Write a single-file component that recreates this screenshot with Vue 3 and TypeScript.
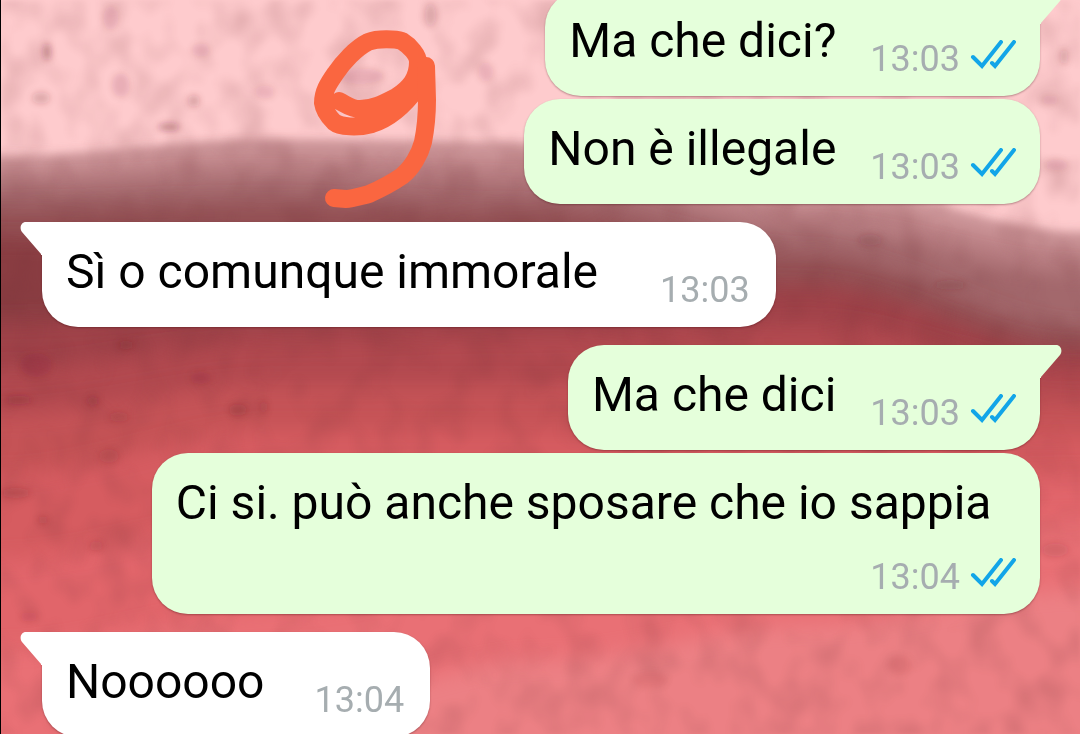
<script setup lang="ts">
interface Message {
  id: number
  text: string
  time: string
  sent: boolean
  tail: boolean
  short?: boolean
}

const messages: Message[] = [
  { id: 1, text: 'Ma che dici?', time: '13:03', sent: true, tail: true },
  { id: 2, text: 'Non è illegale', time: '13:03', sent: true, tail: false },
  { id: 3, text: 'Sì o comunque immorale', time: '13:03', sent: false, tail: true },
  { id: 4, text: 'Ma che dici', time: '13:03', sent: true, tail: true },
  { id: 5, text: 'Ci si. può anche sposare che io sappia', time: '13:04', sent: true, tail: false },
  { id: 6, text: 'Noooooo', time: '13:04', sent: false, tail: true, short: true },
]

interface Layer {
  color: string
  ys: number[]
}

// Each layer fills everything below a curve through five evenly spaced heights.
const layers: Layer[] = [
  { color: '#cf989b', ys: [156, 139, 142, 180, 232] },
  { color: '#b97f83', ys: [170, 156, 161, 205, 246] },
  { color: '#a3686c', ys: [186, 178, 184, 230, 272] },
  { color: '#934f53', ys: [208, 203, 210, 255, 330] },
  { color: '#8a3d43', ys: [238, 245, 250, 400, 480] },
  { color: '#a0434a', ys: [322, 312, 300, 285, 350] },
  { color: '#b2484f', ys: [370, 340, 335, 325, 372] },
  { color: '#c55257', ys: [415, 385, 385, 380, 400] },
  { color: '#d65c61', ys: [475, 430, 430, 430, 435] },
  { color: '#e1656a', ys: [560, 520, 500, 490, 475] },
  { color: '#e97075', ys: [650, 610, 580, 550, 520] },
  { color: '#ec8084', ys: [800, 710, 660, 625, 590] },
]

function layerPath(ys: number[]): string {
  let d = `M-60 ${ys[0]} L0 ${ys[0]}`
  for (let i = 1; i < ys.length; i++) {
    const x = i * 270
    d += ` C${x - 180} ${ys[i - 1]} ${x - 90} ${ys[i]} ${x} ${ys[i]}`
  }
  return `${d} L1140 ${ys[4]} V860 H-60 Z`
}

const spots: number[][] = [
  [46, 52, 4, 9, 0.35], [120, 85, 9, 12, 0.14], [40, 98, 9, 6, 0.2], [193, 101, 6, 6, 0.24],
  [168, 127, 11, 4, 0.34], [200, 50, 9, 7, 0.13], [360, 76, 24, 8, 0.13], [430, 15, 6, 12, 0.16],
  [110, 18, 8, 12, 0.12], [485, 72, 8, 10, 0.12], [264, 92, 10, 7, 0.12], [1064, 57, 4, 8, 0.2],
  [1050, 100, 9, 5, 0.12], [1056, 165, 12, 6, 0.12], [125, 345, 8, 4, 0.24], [35, 365, 16, 12, 0.14],
  [18, 400, 13, 4, 0.28], [92, 401, 6, 4, 0.26], [118, 417, 10, 5, 0.18], [237, 410, 9, 6, 0.22],
  [108, 456, 10, 7, 0.16], [15, 493, 14, 5, 0.22], [42, 520, 5, 4, 0.2], [95, 546, 7, 5, 0.16],
  [200, 378, 11, 6, 0.14], [263, 407, 4, 6, 0.16], [28, 617, 9, 5, 0.12], [1055, 550, 14, 7, 0.16],
  [950, 285, 16, 5, 0.2], [870, 240, 12, 6, 0.16], [900, 665, 12, 10, 0.08], [650, 680, 18, 8, 0.07],
]
</script>

<template>
  <main class="chat">
    <svg class="wallpaper" viewBox="0 0 1080 734" preserveAspectRatio="none" aria-hidden="true">
      <defs>
        <filter id="soft" x="-10%" y="-20%" width="120%" height="140%">
          <feGaussianBlur stdDeviation="10" />
        </filter>
        <filter id="edge" x="-10%" y="-20%" width="120%" height="140%">
          <feGaussianBlur stdDeviation="5" />
        </filter>
        <filter id="spot" x="-10%" y="-10%" width="120%" height="120%">
          <feGaussianBlur stdDeviation="3" />
        </filter>
        <filter id="grain" x="0" y="0" width="100%" height="100%" color-interpolation-filters="sRGB">
          <feTurbulence type="fractalNoise" baseFrequency="0.03 0.025" numOctaves="2" seed="7" />
          <feColorMatrix values="0 0 0 0 0.45  0 0 0 0 0.18  0 0 0 0 0.2  0.4 0 0 0 -0.17" />
          <feGaussianBlur stdDeviation="2" />
        </filter>
      </defs>
      <rect width="1080" height="734" fill="#fecbcd" />
      <path
        v-for="(layer, i) in layers"
        :key="layer.color"
        :d="layerPath(layer.ys)"
        :fill="layer.color"
        :filter="i === 0 ? 'url(#edge)' : 'url(#soft)'"
      />
      <rect width="1080" height="734" filter="url(#grain)" />
      <g filter="url(#spot)" fill="#6b1f2a">
        <ellipse
          v-for="(s, i) in spots"
          :key="i"
          :cx="s[0]"
          :cy="s[1]"
          :rx="s[2]"
          :ry="s[3]"
          :opacity="s[4]"
        />
      </g>
    </svg>

    <svg class="doodle" viewBox="310 25 130 188" aria-hidden="true">
      <g fill="none" stroke="#fa6640" stroke-width="18" stroke-linecap="round" stroke-linejoin="round">
        <path
          d="M339 101 C346 104 350 109 360 109 C374 109 386 102 396 97 C410 88 418 78 418 62 C418 55 410 46 402 41 C396 39 378 38 368 42 C356 48 343 62 335 74 C328 84 323 92 323 103 C324 110 329 117 334 122 C340 127 358 128 372 124 C388 119 404 106 417 88"
        />
        <path
          d="M426 66 L427 100 C427 118 425 132 423 142 C420 154 412 168 402 176 C392 183 378 190 369 194 C361 196 352 199 346 199 L334 198"
        />
      </g>
    </svg>

    <ol class="messages">
      <li
        v-for="m in messages"
        :key="m.id"
        class="row"
        :class="{ sent: m.sent, received: !m.sent, tailed: m.tail, short: m.short }"
      >
        <article class="bubble">
          <svg v-if="m.tail" class="tail" viewBox="0 0 22 33" aria-hidden="true">
            <path d="M0 0 H16 C21 0 23 6 20 10 L1 32 V33 H0 Z" />
          </svg>
          <p class="text">{{ m.text }}</p>
          <div class="meta">
            <time class="time">{{ m.time }}</time>
            <svg v-if="m.sent" class="ticks" viewBox="0 0 46 30" role="img" aria-label="Letto">
              <path d="M3 17 L12 26 L31 2 M22 23 L25 26 L44 2" />
            </svg>
          </div>
        </article>
      </li>
    </ol>
  </main>
</template>

<style>
body {
  margin: 0;
}
</style>

<style scoped>
.chat {
  position: relative;
  height: 100vh;
  overflow: hidden;
  background: #fdc9cb;
  font-family: Roboto, "Liberation Sans", sans-serif;
}

.wallpaper {
  position: absolute;
  inset: 0;
  width: 100%;
  height: 100%;
  border-left: 1px solid #000;
  box-sizing: border-box;
}

.doodle {
  position: absolute;
  left: 310px;
  top: 25px;
  width: 130px;
  height: 188px;
}

.messages {
  position: relative;
  display: flex;
  flex-direction: column;
  margin: -27px 0 0;
  padding: 0 40px 0 42px;
  list-style: none;
}

.row {
  display: flex;
  margin-top: 3px;
}

.row.tailed {
  margin-top: 18px;
}

.row.sent {
  justify-content: flex-end;
}

.bubble {
  position: relative;
  display: flex;
  flex-wrap: wrap;
  align-items: flex-end;
  justify-content: space-between;
  gap: 14px 34px;
  box-sizing: border-box;
  max-width: 89%;
  padding: 22px 24px 16px 24px;
  border-radius: 36px;
  background: #e5ffdb;
  box-shadow: 0 1px 2px rgba(60, 10, 15, 0.35);
}

.received .bubble {
  column-gap: 62px;
  padding-right: 26px;
  background: #fff;
}

.received.short .bubble {
  column-gap: 50px;
}

.sent.tailed .bubble {
  border-top-right-radius: 0;
}

.received.tailed .bubble {
  border-top-left-radius: 0;
}

.tail {
  position: absolute;
  top: 0;
  left: 100%;
  width: 22px;
  height: 33px;
  fill: #e5ffdb;
}

.received .tail {
  right: 100%;
  left: auto;
  fill: #fff;
  transform: scaleX(-1);
}

.text {
  margin: 0 0 11px;
  color: #000;
  font-size: 48px;
  line-height: 56px;
}

.meta {
  display: flex;
  align-items: flex-end;
  gap: 10px;
  margin-left: auto;
}

.time {
  color: #a6adb0;
  font-size: 36px;
  line-height: 42px;
}

.ticks {
  width: 46px;
  height: 30px;
  margin-bottom: 10px;
  fill: none;
  stroke: #12a5e8;
  stroke-width: 4;
  stroke-linecap: round;
}
</style>
